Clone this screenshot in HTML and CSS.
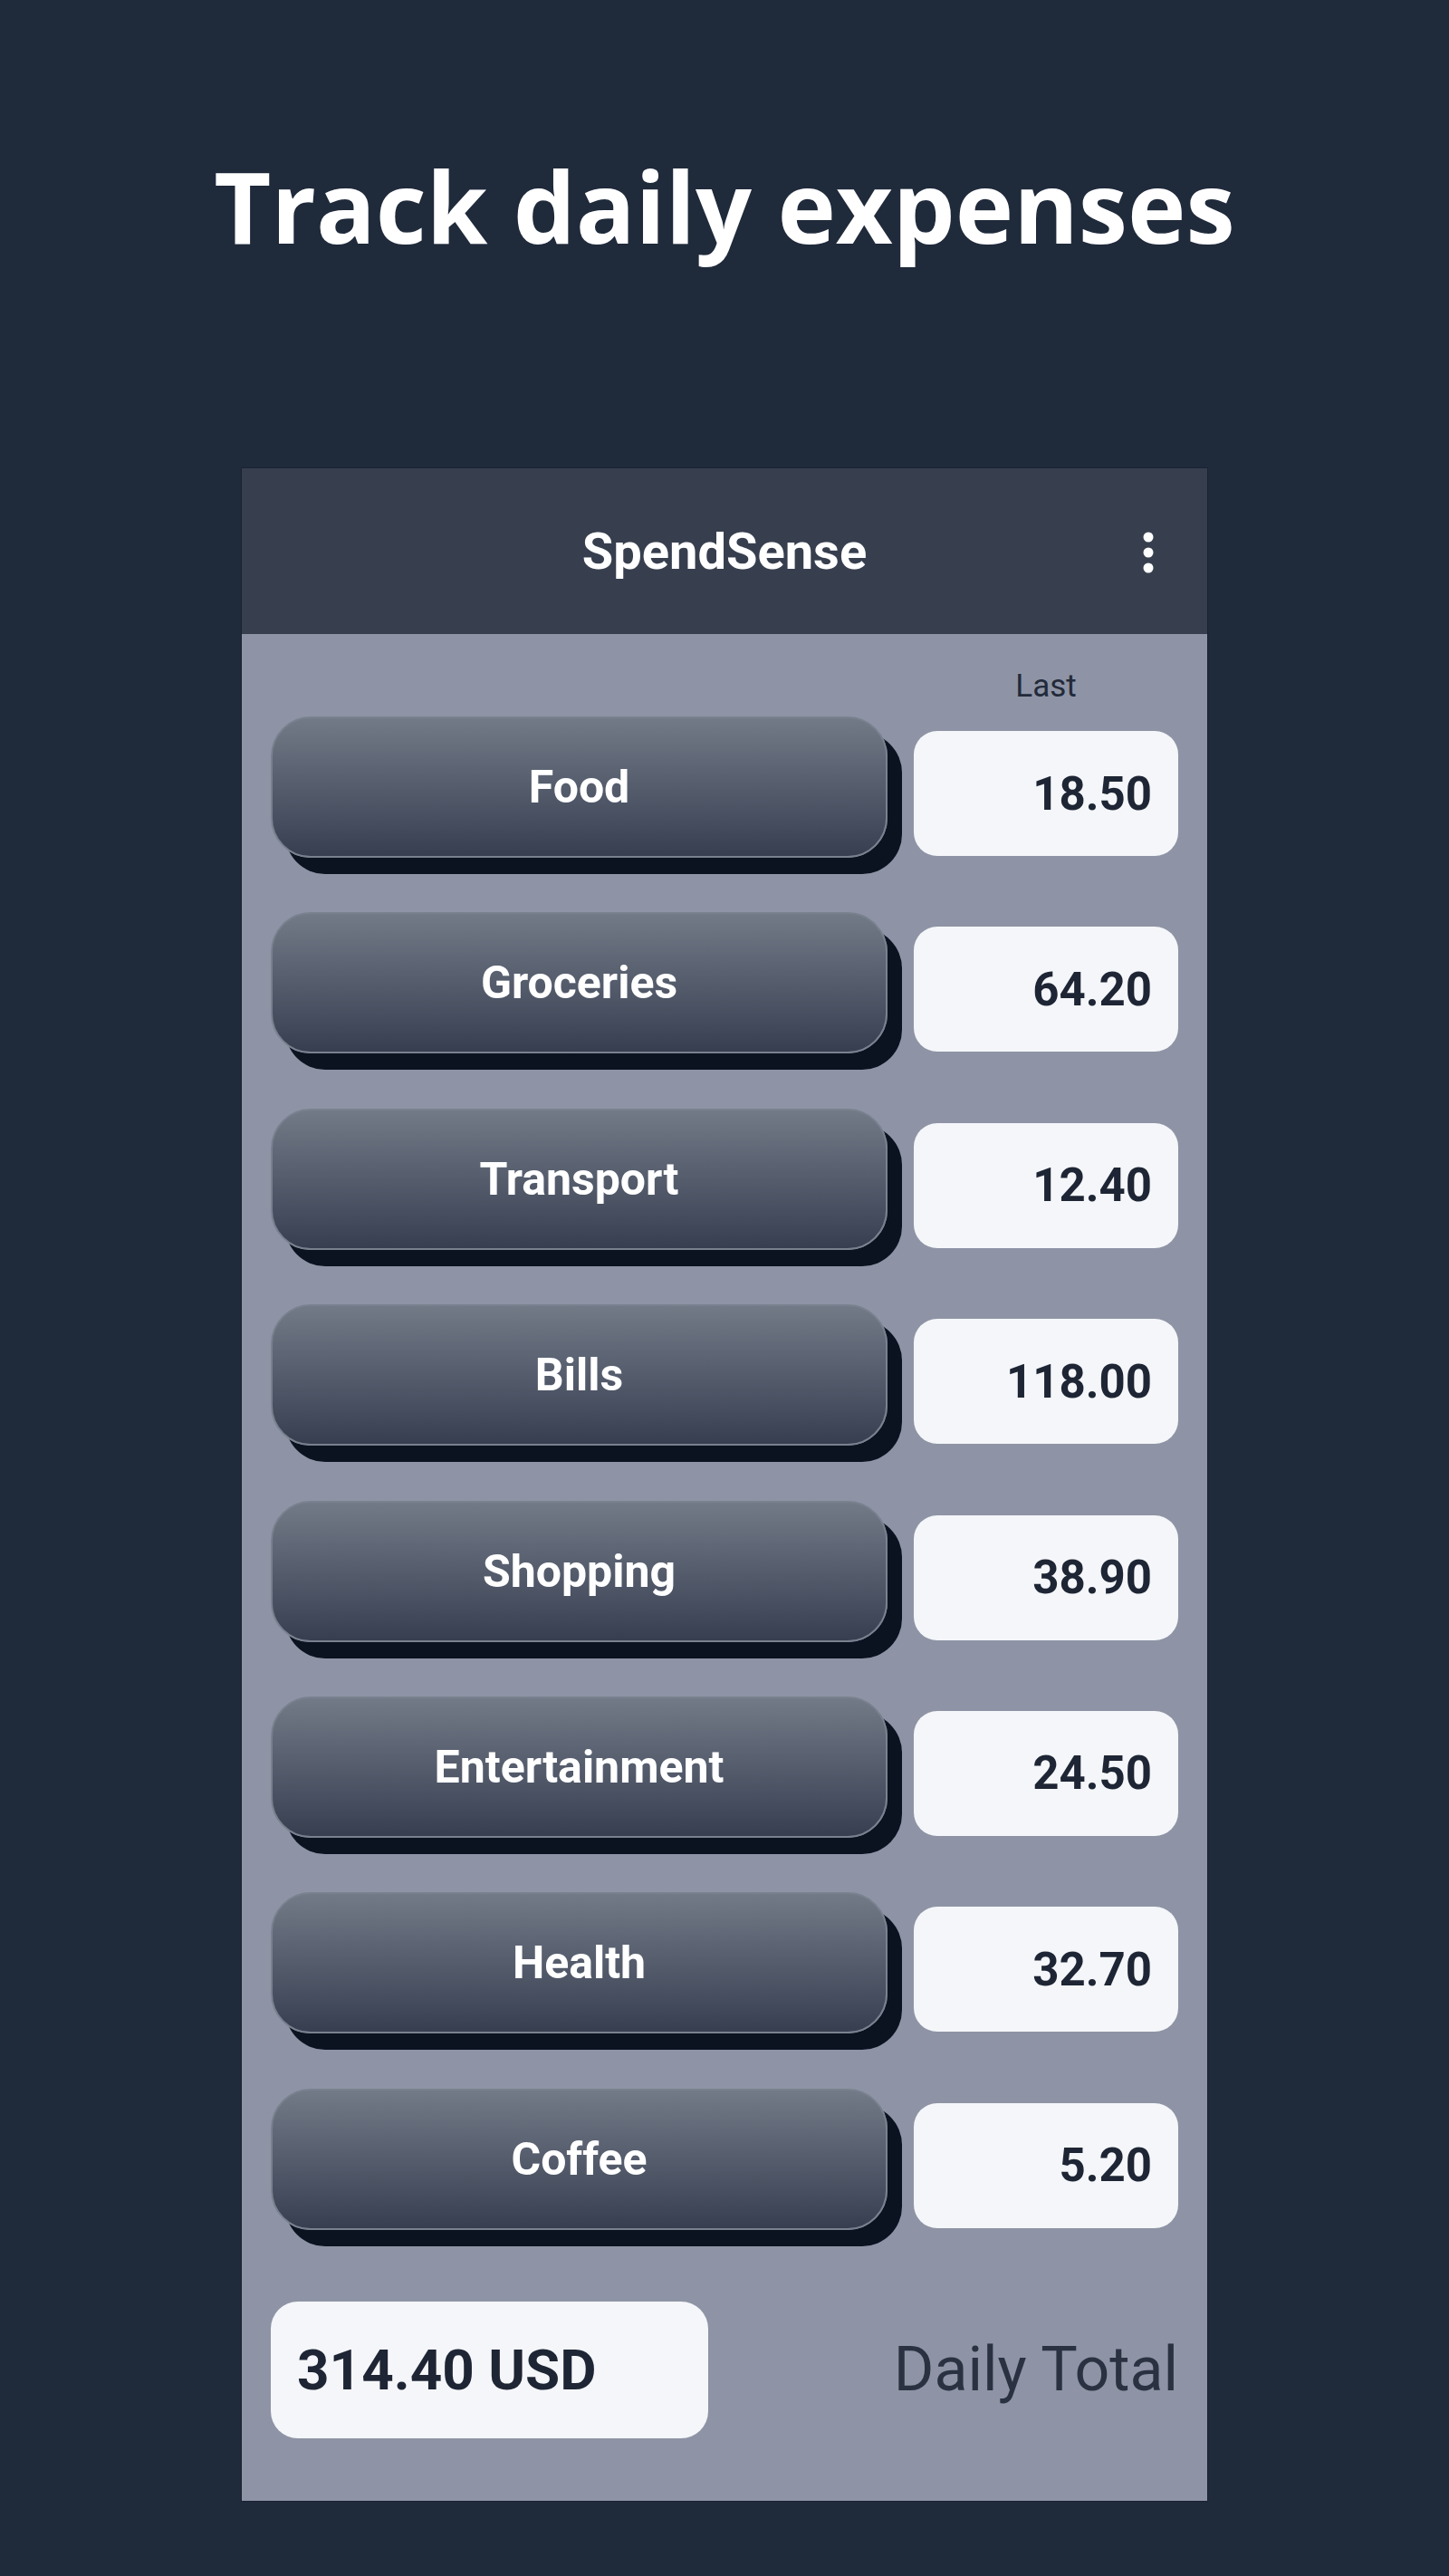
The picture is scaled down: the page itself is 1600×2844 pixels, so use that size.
FILE: index.html
```html
<!DOCTYPE html>
<html>
<head>
<meta charset="utf-8">
<title>SpendSense</title>
<link rel="stylesheet" href="styles.css">
</head>
<body>
<h1 class="headline">Track daily expenses</h1>
<div class="phone">
  <header class="appbar">
    <div class="appbar-title">SpendSense</div>
    <svg class="kebab" width="14" height="48" viewBox="0 0 14 48" aria-hidden="true">
      <circle cx="7" cy="7" r="5.5" fill="#ffffff"/>
      <circle cx="7" cy="24" r="5.5" fill="#ffffff"/>
      <circle cx="7" cy="41" r="5.5" fill="#ffffff"/>
    </svg>
  </header>
  <main class="content">
    <div class="col-head"><span class="col-label">Last</span></div>
    <div class="rows">
      <div class="row"><div class="cat-btn">Food</div><div class="value">18.50</div></div>
      <div class="row"><div class="cat-btn">Groceries</div><div class="value">64.20</div></div>
      <div class="row"><div class="cat-btn">Transport</div><div class="value">12.40</div></div>
      <div class="row"><div class="cat-btn">Bills</div><div class="value">118.00</div></div>
      <div class="row"><div class="cat-btn">Shopping</div><div class="value">38.90</div></div>
      <div class="row"><div class="cat-btn">Entertainment</div><div class="value">24.50</div></div>
      <div class="row"><div class="cat-btn">Health</div><div class="value">32.70</div></div>
      <div class="row"><div class="cat-btn">Coffee</div><div class="value">5.20</div></div>
    </div>
    <div class="footer">
      <div class="total">314.40 USD</div>
      <div class="total-label">Daily Total</div>
    </div>
  </main>
</div>
</body>
</html>
```
FILE: styles.css
```css
html, body {
  margin: 0;
  padding: 0;
}
body {
  background: #1f2a3b;
  width: 1600px;
  min-height: 2844px;
  font-family: Roboto, "Liberation Sans", sans-serif;
}
.headline {
  margin: 0;
  padding-top: 161px;
  font-family: "Open Sans", "Noto Sans", sans-serif;
  font-weight: 700;
  font-size: 109px;
  line-height: 132px;
  color: #ffffff;
  text-align: center;
  letter-spacing: 0;
}
.phone {
  width: 1066px;
  margin: 224px auto 0;
  background: #8e94a5;
  box-shadow: 0 0 0 1px #1a2232;
}
.appbar {
  position: relative;
  height: 183px;
  background: #373f4f;
  display: flex;
  align-items: center;
  justify-content: center;
}
.appbar-title {
  color: #ffffff;
  font-weight: 700;
  font-size: 56px;
  letter-spacing: 0;
}
.kebab {
  position: absolute;
  right: 58px;
  top: 69px;
}
.content {
  padding: 40px 32px 69px;
}
.col-head {
  display: flex;
  justify-content: flex-end;
  height: 36px;
  margin-bottom: 15px;
}
.col-label {
  width: 292px;
  text-align: center;
  font-size: 35px;
  line-height: 36px;
  color: #222a3a;
}
.rows {
  display: flex;
  flex-direction: column;
  gap: 60.4px;
}
.row {
  display: flex;
  align-items: flex-start;
  gap: 29px;
}
.cat-btn {
  width: 681px;
  height: 156px;
  box-sizing: border-box;
  border-radius: 44px;
  border: 2px solid #79818f;
  background: linear-gradient(to bottom, #727a87 0%, #555d6d 50%, #363e50 100%);
  box-shadow: 16px 18px 0 #0b1220;
  display: flex;
  align-items: center;
  justify-content: center;
  color: #ffffff;
  font-weight: 700;
  font-size: 50px;
}
.value {
  width: 292px;
  height: 138px;
  margin-top: 16px;
  box-sizing: border-box;
  border-radius: 26px;
  background: #f4f6f9;
  display: flex;
  align-items: center;
  justify-content: flex-end;
  padding-right: 29px;
  color: #1e2534;
  font-weight: 700;
  font-size: 51px;
}
.footer {
  margin-top: 79px;
  display: flex;
  align-items: center;
  justify-content: space-between;
}
.total {
  width: 483px;
  height: 151px;
  box-sizing: border-box;
  border-radius: 30px;
  background: #f4f6f9;
  display: flex;
  align-items: center;
  padding-left: 29px;
  color: #1e2534;
  font-weight: 700;
  font-size: 62px;
}
.total-label {
  color: #2a3242;
  font-size: 68px;
  font-weight: 400;
}
```
